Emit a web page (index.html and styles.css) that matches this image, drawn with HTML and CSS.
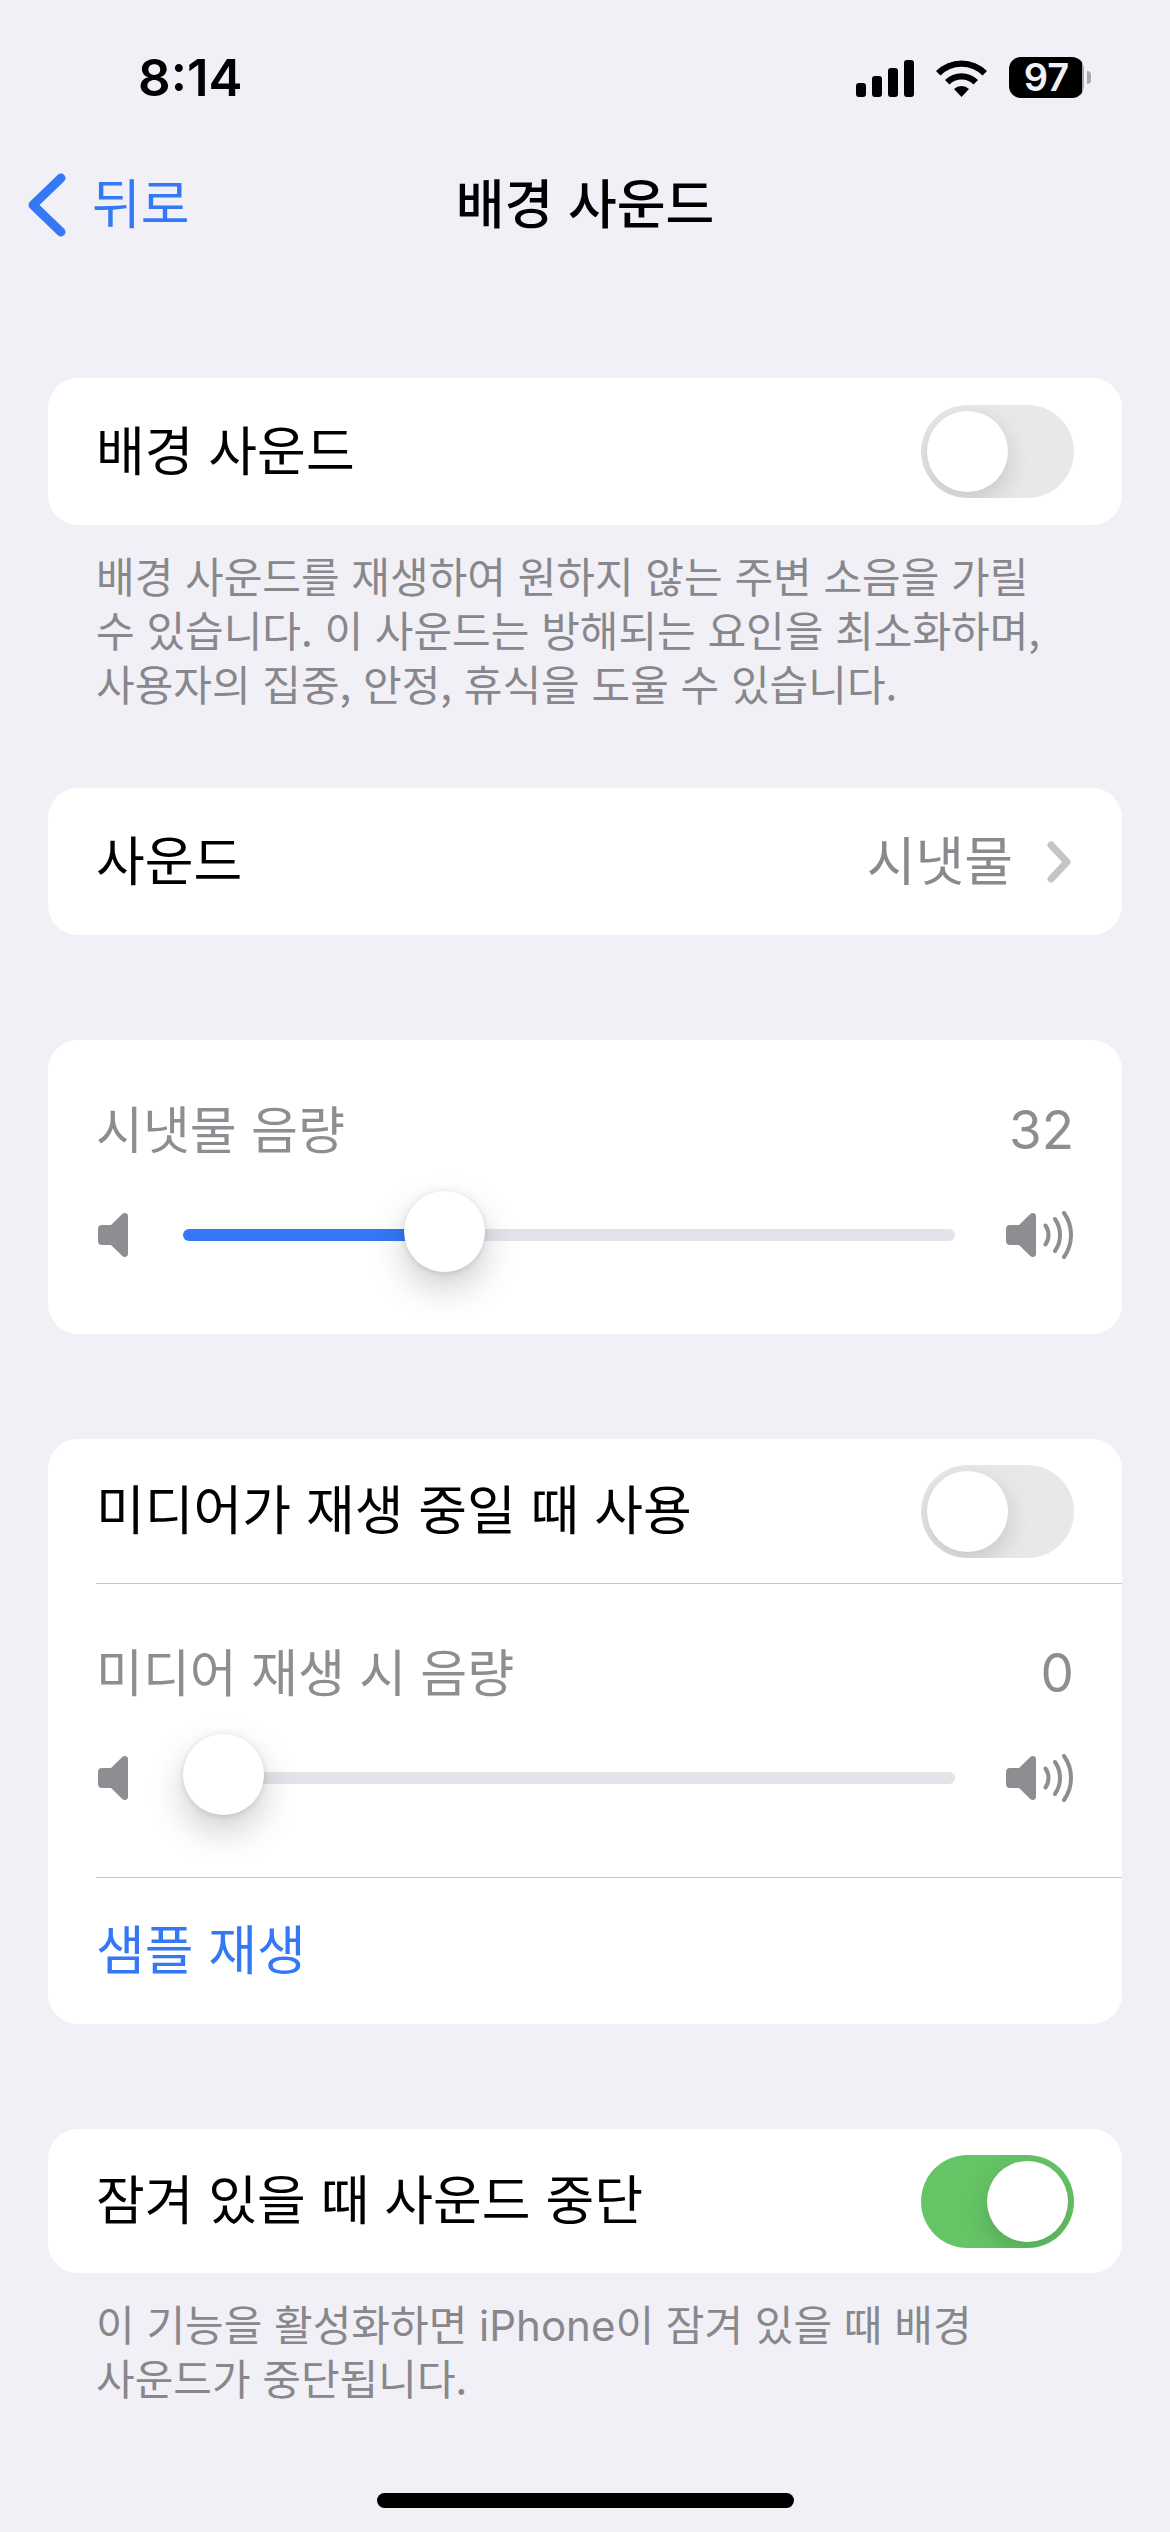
FILE: index.html
```html
<!DOCTYPE html>
<html lang="ko">
<head>
  <meta charset="UTF-8" />
  <meta name="viewport" content="width=device-width, initial-scale=1" />
  <title>배경 사운드</title>
  <link rel="stylesheet" href="styles.css">
</head>
<body>

<!-- speaker icons, used by both sliders -->
<svg class="sprite" aria-hidden="true">
  <symbol id="speaker" viewBox="0 0 30 48">
    <path d="M4 14H13L24 3.2Q26 1.4 28 2.2Q30 3 30 5V43Q30 45 28 45.8Q26 46.6 24 44.8L13 34H4Q0 34 0 30V18Q0 14 4 14Z" fill="currentColor"/>
  </symbol>
  <symbol id="speaker-wave" viewBox="0 0 68 48">
    <path d="M4 14H13L24 3.2Q26 1.4 28 2.2Q30 3 30 5V43Q30 45 28 45.8Q26 46.6 24 44.8L13 34H4Q0 34 0 30V18Q0 14 4 14Z" fill="currentColor"/>
    <path d="M39.5 14.5A16.5 16.5 0 0 1 39.5 33.5M49 8A28 28 0 0 1 49 40M58 2A38 38 0 0 1 58 46" fill="none" stroke="currentColor" stroke-width="4" stroke-linecap="round"/>
  </symbol>
</svg>

<div class="status-bar">
  <span class="time">8:14</span>
  <div class="status-icons">
    <svg class="signal" viewBox="0 0 58 38" width="58" height="38">
      <rect x="0" y="24" width="10" height="14" rx="3"/>
      <rect x="16" y="17" width="10" height="21" rx="3"/>
      <rect x="32" y="9" width="10" height="29" rx="3"/>
      <rect x="48" y="1" width="10" height="37" rx="3"/>
    </svg>
    <svg class="wifi" viewBox="0 0 51 38" width="51" height="38">
      <path d="M0 12A36 36 0 0 1 51 12L46.500 16.500A29.500 29.500 0 0 0 4.500 16.500Z"/>
      <path d="M9 21A23.500 23.500 0 0 1 42 21L37.500 25.500A17 17 0 0 0 13.500 25.500Z"/>
      <path d="M18 30A11 11 0 0 1 33 30L25.500 38Z"/>
    </svg>
    <div class="battery">
      <span class="battery-level">97</span>
      <span class="battery-tip"></span>
    </div>
  </div>
</div>

<header class="navbar">
  <a class="back" href="#">
    <svg viewBox="0 0 38 64" width="38" height="64">
      <path d="M33 5L5 32L33 59" fill="none" stroke="currentColor" stroke-width="9" stroke-linecap="round" stroke-linejoin="round"/>
    </svg>
    <span class="text">뒤로</span>
  </a>
  <h1 class="text">배경 사운드</h1>
</header>

<main>
  <section class="group">
    <div class="card">
      <label class="row">
        <span class="text">배경 사운드</span>
        <input type="checkbox" class="toggle">
      </label>
    </div>
    <p class="note">배경 사운드를 재생하여 원하지 않는 주변 소음을 가릴 수 있습니다. 이 사운드는 방해되는 요인을 최소화하며, 사용자의 집중, 안정, 휴식을 도울 수 있습니다.</p>
  </section>

  <section class="card">
    <a class="row" href="#">
      <span class="text">사운드</span>
      <span class="value">
        <span class="text">시냇물</span>
        <svg viewBox="0 0 24 42" width="24" height="42">
          <path d="M4 4L20 21L4 38" fill="none" stroke="#c5c5c7" stroke-width="7" stroke-linecap="round" stroke-linejoin="round"/>
        </svg>
      </span>
    </a>
  </section>

  <section class="card">
    <div class="volume">
      <div class="volume-head">
        <label for="streamVolume">시냇물 음량</label>
        <output for="streamVolume">32</output>
      </div>
      <div class="volume-slider">
        <svg width="30" height="48"><use href="#speaker"/></svg>
        <input type="range" id="streamVolume" min="0" max="100" value="32" style="--fill: 32%">
        <svg width="68" height="48"><use href="#speaker-wave"/></svg>
      </div>
    </div>
  </section>

  <section class="card">
    <label class="row compact">
      <span class="text">미디어가 재생 중일 때 사용</span>
      <input type="checkbox" class="toggle">
    </label>
    <div class="volume">
      <div class="volume-head">
        <label for="mediaVolume">미디어 재생 시 음량</label>
        <output for="mediaVolume">0</output>
      </div>
      <div class="volume-slider">
        <svg width="30" height="48"><use href="#speaker"/></svg>
        <input type="range" id="mediaVolume" min="0" max="100" value="0" style="--fill: 0%">
        <svg width="68" height="48"><use href="#speaker-wave"/></svg>
      </div>
    </div>
    <button type="button" class="row action"><span class="text">샘플 재생</span></button>
  </section>

  <section class="group">
    <div class="card">
      <label class="row compact">
        <span class="text">잠겨 있을 때 사운드 중단</span>
        <input type="checkbox" class="toggle" checked>
      </label>
    </div>
    <p class="note">이 기능을 활성화하면 <span lang="en">iPhone</span>이 잠겨 있을 때 배경 사운드가 중단됩니다.</p>
  </section>
</main>

<div class="home-indicator"></div>

<script>
  document.querySelectorAll("input[type=range]").forEach(slider => {
    slider.addEventListener("input", () => {
      slider.style.setProperty("--fill", slider.value + "%");
      document.querySelector(`output[for=${slider.id}]`).textContent = slider.value;
    });
  });
</script>
</body>
</html>
```

FILE: styles.css
```css
* {
  box-sizing: border-box;
}
body {
  margin: 0;
  min-height: 100vh;
  display: flex;
  flex-direction: column;
  background: #f1f0f6;
  color: #000;
  font-family: 'Noto Sans CJK KR', sans-serif;
  font-size: 53px;
  line-height: 60px;
  word-break: keep-all;
}
a {
  color: inherit;
  text-decoration: none;
}
svg {
  display: block;
  flex: none;
}
.sprite {
  position: absolute;
  width: 0;
  height: 0;
}
/* hangul sits low in its line box, lift it to the row's centre */
.text {
  padding-bottom: 8px;
}

/* status bar */
.status-bar {
  height: 155px;
  padding: 0 79px 0 138px;
  display: flex;
  align-items: center;
  justify-content: space-between;
  font-family: Inter, sans-serif;
  font-weight: 600;
}
.time {
  font-size: 51px;
}
.status-icons {
  display: flex;
  align-items: center;
  gap: 22px;
}
.battery {
  display: flex;
  align-items: center;
  gap: 3px;
}
.battery-level {
  width: 75px;
  height: 41px;
  border-radius: 12px;
  background: linear-gradient(to right, #000 97%, #a9a9ad 97%);
  color: #f1f0f6;
  font-size: 38px;
  line-height: 41px;
  text-align: center;
}
.battery-tip {
  width: 4px;
  height: 13px;
  border-radius: 0 4px 4px 0;
  background: #a9a9ad;
}

/* nav bar */
.navbar {
  height: 100px;
  padding: 0 28px;
  display: grid;
  grid-template-columns: 1fr auto 1fr;
  align-items: center;
}
.navbar h1 {
  margin: 0;
  font-size: 53px;
  font-weight: 500;
}
.back {
  display: flex;
  align-items: center;
  gap: 26px;
  color: #3478f6;
}

/* settings groups */
main {
  padding: 123px 48px 48px;
  display: flex;
  flex-direction: column;
  gap: 105px;
}
.card {
  background: #fff;
  border-radius: 30px;
}
.row {
  min-height: 147px;
  padding: 0 48px;
  display: flex;
  align-items: center;
  justify-content: space-between;
}
.row.compact {
  min-height: 144px;
}
.value {
  display: flex;
  align-items: center;
  gap: 34px;
  padding-right: 3px;
  color: #8a8a8e;
}
.action {
  width: 100%;
  border: none;
  background: none;
  color: #3478f6;
  font: inherit;
  cursor: pointer;
}
.note {
  margin: 0;
  padding: 23px 48px 0;
  color: #88878c;
  font-size: 42px;
  line-height: 54px;
}
.note span {
  font-family: Inter, sans-serif;
  line-height: 1;
}
.group:first-child {
  margin-bottom: -27px;
}

/* toggle */
.toggle {
  appearance: none;
  flex: none;
  width: 153px;
  height: 93px;
  margin: 0;
  padding: 6px;
  border-radius: 47px;
  background: #e8e8e8;
  overflow: hidden;
  display: flex;
  cursor: pointer;
}
.toggle::before {
  content: "";
  width: 81px;
  height: 81px;
  border-radius: 50%;
  background: #fff;
  box-shadow: 0 9px 24px rgba(0, 0, 0, 0.15);
}
.toggle:checked {
  justify-content: flex-end;
  background: #65c466;
}

/* volume */
.volume {
  height: 294px;
  padding: 57px 48px 0;
  color: #8e8d92;
}
.volume-head {
  display: flex;
  justify-content: space-between;
  font-size: 51px;
}
.volume output {
  font-family: Inter, sans-serif;
  font-size: 53px;
  line-height: 66px;
}
.volume-slider {
  height: 81px;
  padding: 0 0 0 2px;
  margin-top: 31px;
  display: flex;
  align-items: center;
}
.volume-slider input {
  appearance: none;
  flex: 1;
  min-width: 0;
  height: 81px;
  margin: 0 51px 0 55px;
  background: none;
  cursor: pointer;
}
.volume-slider input::-webkit-slider-runnable-track {
  height: 12px;
  border-radius: 6px;
  background: linear-gradient(to right, #3478f6 var(--fill), #e4e3e9 var(--fill));
}
.volume-slider input::-webkit-slider-thumb {
  appearance: none;
  width: 81px;
  height: 81px;
  margin-top: -38px;
  border-radius: 50%;
  background: #fff;
  box-shadow: 0 1px 6px rgba(0, 0, 0, 0.12), 0 16px 36px rgba(0, 0, 0, 0.2);
}

/* dividers run from the text inset to the card edge */
.row + .volume,
.volume + .row {
  background: linear-gradient(#c6c6c8, #c6c6c8) 48px 0 / 100% 1px no-repeat;
}

.home-indicator {
  width: 417px;
  height: 15px;
  margin: auto auto 24px;
  border-radius: 8px;
  background: #000;
}
```
